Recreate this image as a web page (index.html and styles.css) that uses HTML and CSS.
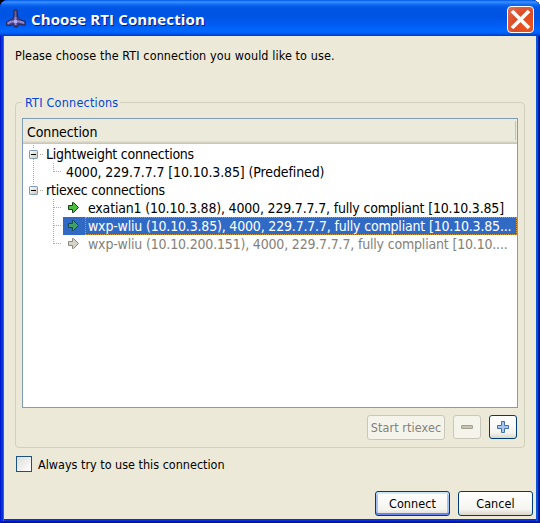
FILE: index.html
```html
<!DOCTYPE html>
<html lang="en">
<head>
<meta charset="utf-8">
<title>Choose RTI Connection</title>
<link rel="stylesheet" href="styles.css">
</head>
<body>
<div class="window">
  <header class="titlebar">
    <svg class="app-icon" width="20" height="20" viewBox="0 0 20 20">
      <path d="M8 1h3l.8 7 2.700 3 5.500 1.500v3.500h-5l-2-1-1.500 3h-3l-1.500-3-2 1.500h-4.500v-3.500l4-2 3-3z" fill="#443f78" stroke="#24264f" stroke-width=".9"/>
      <path d="M9.500 2v7" stroke="#6a6596" stroke-width="1.400"/>
      <path d="M9.500 8v8M5.500 12.500h8M1.500 14.500l4-2M13.500 12.500l4.500 1.500" stroke="#9187d4" stroke-width="2" fill="none"/>
      <rect x="8" y="11" width="3" height="3" fill="#b8abf5"/>
    </svg>
    <h1 class="title">Choose RTI Connection</h1>
    <button class="close" aria-label="Close">
      <svg width="25" height="25" viewBox="0 0 25 25"><path d="M4 4l17 17M21 4l-17 17" stroke="#fff" stroke-width="3.800"/></svg>
    </button>
  </header>
  <main class="content">
    <p class="prompt"><span>Please choose the RTI connection you would like to use.</span></p>
    <section class="group">
      <h2 class="legend"><span>RTI Connections</span></h2>
      <div class="tree">
        <div class="tree-head"><span>Connection</span></div>
        <div class="row">
          <svg class="guides" width="23" height="18"><path d="M10.500 0v3M10.500 14v4M17 9.500h4" class="dots"/><use href="#collapse"/></svg>
          <span class="t1">Lightweight connections</span>
        </div>
        <div class="row">
          <svg class="guides" width="43" height="18"><path d="M10.500 0v18M30.500 0v9M31 8.500h8" class="dots"/></svg>
          <span class="t2">4000, 229.7.7.7 [10.10.3.85] (Predefined)</span>
        </div>
        <div class="row">
          <svg class="guides" width="23" height="18"><path d="M10.500 0v3M17 9.500h4" class="dots"/><use href="#collapse"/></svg>
          <span class="t3">rtiexec connections</span>
        </div>
        <div class="row">
          <svg class="guides" width="40" height="18"><path d="M30.500 0v18M31 8.500h8" class="dots"/></svg>
          <div class="leaf"><svg class="arrow" width="11" height="12"><use href="#arrow"/></svg><span class="label">exatian1 (10.10.3.88), 4000, 229.7.7.7, fully compliant [10.10.3.85]</span></div>
        </div>
        <div class="row">
          <svg class="guides" width="40" height="18"><path d="M30.500 0v18M31 8.500h8" class="dots"/></svg>
          <div class="leaf selected"><svg class="arrow" width="11" height="12"><use href="#arrow"/></svg><span class="label">wxp-wliu (10.10.3.85), 4000, 229.7.7.7, fully compliant [10.10.3.85...</span></div>
        </div>
        <div class="row">
          <svg class="guides" width="40" height="18"><path d="M30.500 0v9M31 8.500h8" class="dots"/></svg>
          <div class="leaf disabled"><svg class="arrow" width="11" height="12"><use href="#arrow"/></svg><span class="label">wxp-wliu (10.10.200.151), 4000, 229.7.7.7, fully compliant [10.10....</span></div>
        </div>
      </div>
      <div class="tools">
        <button class="btn start" disabled><span>Start rtiexec</span></button>
        <button class="btn small" disabled aria-label="Remove"><svg width="12" height="12"><rect x=".5" y="4.500" width="11" height="3" rx=".5" fill="#c5c2b4" stroke="#a5a191"/></svg></button>
        <button class="btn small" aria-label="Add"><svg width="12" height="12"><path d="M4.500.5h3v4h4v3h-4v4h-3v-4h-4v-3h4z" fill="#a9c7ec" stroke="#426fad"/></svg></button>
      </div>
    </section>
    <label class="always"><i class="check"></i><span>Always try to use this connection</span></label>
    <footer class="actions">
      <button class="btn action default"><span>Connect</span></button>
      <button class="btn action"><span>Cancel</span></button>
    </footer>
  </main>
</div>
<svg width="0" height="0" class="defs">
  <defs>
    <linearGradient id="boxfill" x2="1" y2="1"><stop stop-color="#fff"/><stop offset="1" stop-color="#cbc6b8"/></linearGradient>
    <g id="collapse"><rect x="6.500" y="5.500" width="8" height="8" rx=".7" fill="url(#boxfill)" stroke="#7b99b8"/><path d="M8 9.500h5" stroke="#000"/></g>
    <path id="arrow" d="M.5 3.500h4v-3h1l5 5-5 5h-1v-3h-4z"/>
  </defs>
</svg>
</body>
</html>
```
FILE: styles.css
```css
* { box-sizing: border-box; }
html, body { margin: 0; background: linear-gradient(90deg, #000 50%, #fff 50%); }
body { font: 12.5px "DejaVu Sans Condensed", "DejaVu Sans", sans-serif; font-stretch: condensed; letter-spacing: .08px; color: #000; }
h1, h2, p { margin: 0; }
svg { display: block; flex: none; }
button { font: inherit; letter-spacing: inherit; padding: 0; }
span { white-space: nowrap; }
.defs { position: absolute; }
.window {
  width: 540px; height: 523px; padding: 0 4px 4px; border-radius: 8px 8px 0 0;
  background: #0831d9; display: flex; flex-direction: column;
  box-shadow: inset 1px 0 #0019cf, inset -1px 0 #00138c, inset -2px 0 #001ea0, inset 0 -1px #00138c, inset 0 -2px #001ea0, inset 3px 0 #0831d9, inset 4px 0 #166aee, inset -4px 0 #0855dd;
}
.titlebar {
  height: 36px; flex: none; margin: 0 -4px; padding: 2px 6px 0; display: flex; align-items: center;
  border-radius: 8px 8px 0 0;
  background: linear-gradient(#0058e6 0, #3a93ff 2px, #2a80ff 3px, #0a66f0 5px, #0055e5 8px, #0054e3 17px, #005cf5 25px, #0068ff 31px, #0060f8 33px, #0043cf 35px, #003dc0 36px);
}
.title {
  flex: 1; margin-left: 5px; font: bold 15px/20px "Open Sans", "Noto Sans", sans-serif; letter-spacing: .14px; color: #fff;
  text-shadow: 1px 1px #0a1883; white-space: nowrap;
}
.close { width: 27px; height: 27px; border: 1px solid #fff; border-radius: 4px; overflow: hidden; background: radial-gradient(circle at 80% 80%, #ee5420, #dc4a22 50%, #e0715a); display: grid; place-items: center; }
.content { flex: 1; background: #ece9d8; display: flex; flex-direction: column; padding: 11px 8px 0 11px; }
.prompt { height: 55px; line-height: 17px; letter-spacing: .1px; }
.group { width: 510px; height: 346px; border: 1px solid #d0d0bf; border-radius: 4px; padding: 0 6px; display: flex; flex-direction: column; flex: none; }
.legend { height: 15px; margin-top: -8px; margin-bottom: 8px; font-size: 12.5px; line-height: 15px; font-weight: normal; letter-spacing: .22px; color: #0046d5; }
.legend span { display: inline-block; background: #ece9d8; padding: 0 2px 0 3px; }
.tree { width: 496px; height: 290px; flex: none; border: 1px solid #7f9db9; background: #fff; font-size: 14px; letter-spacing: -.18px; }
.tree-head { height: 26px; padding: 2px 4px 0; line-height: 22px; letter-spacing: -.1px; background: linear-gradient(90deg, transparent 492px, #c7c5b2 492px, #c7c5b2 493px, transparent 493px) 0 2px/100% 19px no-repeat, linear-gradient(#ebeadb 0 22px, #e2decd 22px 23px, #d6d2c2 23px 24px, #cbc7b8 24px 25px, #fff 25px); }
.row { display: flex; height: 18px; line-height: 18px; }
.t1 { letter-spacing: -.26px; }
.t2 { letter-spacing: -.12px; }
.t3 { letter-spacing: -.2px; }
.dots { stroke: #aca899; stroke-dasharray: 1 1; fill: none; }
.leaf { flex: 1; min-width: 0; display: flex; align-items: center; padding-left: 5px; }
.arrow { fill: #4cbf3d; stroke: #123f16; margin-right: 6px; overflow: visible; }
.label { flex: 1; min-width: 0; height: 18px; padding-left: 2px; border: 1px solid transparent; line-height: 16px; }
.selected { background: #316ac5; color: #fff; }
.selected .label { border: 1px dotted #ce953a; }
.selected .arrow { fill: #3ea068; stroke: #1a4a45; }
.disabled { color: #858178; }
.disabled .arrow { fill: #d6d3c9; stroke: #8b887d; }
.tools { display: flex; justify-content: flex-end; gap: 8px; margin-top: 7px; width: 495px; }
.btn { border: 1px solid #003c74; border-radius: 3px; background: linear-gradient(#fff, #f5f4ef 75%, #dcd7cb); color: #000; height: 24px; display: flex; align-items: center; justify-content: center; }
.btn:disabled { border-color: #c9c7ba; background: #f5f4ea; color: #858178; }
.start { width: 78px; height: 25px; }
.small { width: 28px; }
.always { display: flex; align-items: center; gap: 6px; margin: 8px 0 0 1px; height: 16px; letter-spacing: 0; }
.check { width: 16px; height: 16px; border: 1px solid #1c5180; background: linear-gradient(135deg, #dcdcd7, #fff); }
.actions { display: flex; justify-content: flex-end; gap: 8px; margin: 19px -5px 0 0; }
.action { width: 75px; height: 25px; }
.default { box-shadow: inset 0 2px #cee7ff, inset 0 -2px #6982ee, inset 2px 0 #a5c0f2, inset -2px 0 #a5c0f2; }
```
